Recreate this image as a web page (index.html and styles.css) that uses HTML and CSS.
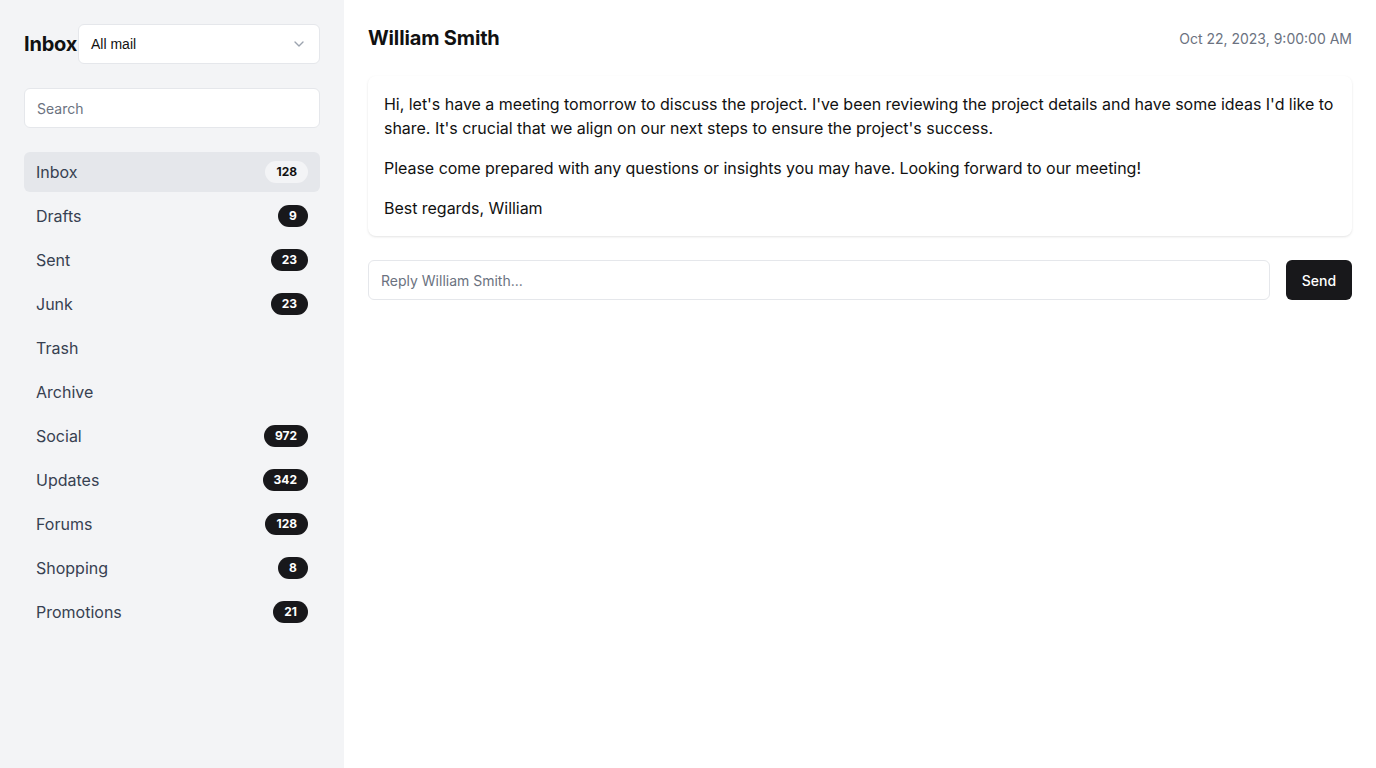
FILE: index.html
```html
<!DOCTYPE html>
<html lang="en">
<head>
<meta charset="utf-8">
<title>Mail</title>
<link rel="stylesheet" href="styles.css">
</head>
<body>
<div class="app">
  <aside class="sidebar">
    <div class="side-head">
      <h1 class="side-title">Inbox</h1>
      <div class="select">
        <span>All mail</span>
        <svg class="chev" width="16" height="16" viewBox="0 0 24 24" fill="none" stroke="currentColor" stroke-width="2" stroke-linecap="round" stroke-linejoin="round"><path d="m6 9 6 6 6-6"/></svg>
      </div>
    </div>
    <div class="search">Search</div>
    <nav class="nav">
      <div class="nav-item active"><span>Inbox</span><span class="badge light">128</span></div>
      <div class="nav-item"><span>Drafts</span><span class="badge">9</span></div>
      <div class="nav-item"><span>Sent</span><span class="badge">23</span></div>
      <div class="nav-item"><span>Junk</span><span class="badge">23</span></div>
      <div class="nav-item"><span>Trash</span></div>
      <div class="nav-item"><span>Archive</span></div>
      <div class="nav-item"><span>Social</span><span class="badge">972</span></div>
      <div class="nav-item"><span>Updates</span><span class="badge">342</span></div>
      <div class="nav-item"><span>Forums</span><span class="badge">128</span></div>
      <div class="nav-item"><span>Shopping</span><span class="badge">8</span></div>
      <div class="nav-item"><span>Promotions</span><span class="badge">21</span></div>
    </nav>
  </aside>
  <main class="main">
    <div class="mail-head">
      <h2 class="sender">William Smith</h2>
      <span class="date">Oct 22, 2023, 9:00:00 AM</span>
    </div>
    <div class="card">
      <p>Hi, let's have a meeting tomorrow to discuss the project. I've been reviewing the project details and have some ideas I'd like to share. It's crucial that we align on our next steps to ensure the project's success.</p>
      <p>Please come prepared with any questions or insights you may have. Looking forward to our meeting!</p>
      <p>Best regards, William</p>
    </div>
    <div class="reply">
      <div class="reply-input">Reply William Smith...</div>
      <button class="send">Send</button>
    </div>
  </main>
</div>
</body>
</html>
```
FILE: styles.css
```css
* { box-sizing: border-box; }
html, body { margin: 0; padding: 0; }
body {
  font-family: Inter, "Noto Sans", sans-serif;
  color: #111111;
  background: #ffffff;
}
.app {
  display: flex;
  width: 1376px;
  height: 768px;
}
.sidebar {
  width: 344px;
  flex: none;
  background: #f3f4f6;
  padding: 24px;
  display: flex;
  flex-direction: column;
}
.side-head {
  display: flex;
  align-items: center;
  height: 40px;
}
.side-title {
  margin: 0;
  font-size: 20px;
  font-weight: 700;
  line-height: 28px;
  letter-spacing: -0.2px;
  width: 54px;
  flex: none;
  color: #111;
}
.select {
  flex: 1;
  height: 40px;
  background: #fff;
  border: 1px solid #e5e7eb;
  border-radius: 6px;
  display: flex;
  align-items: center;
  justify-content: space-between;
  padding: 0 12px;
  font-family: "Liberation Sans", Arial, sans-serif;
  font-size: 14px;
  color: #111;
}
.chev { color: #9ca3af; }
.search {
  margin-top: 24px;
  height: 40px;
  background: #fff;
  border: 1px solid #e5e7eb;
  border-radius: 6px;
  padding: 0 12px;
  display: flex;
  align-items: center;
  font-size: 14px;
  color: #6b7280;
}
.nav {
  margin-top: 24px;
  display: flex;
  flex-direction: column;
  gap: 4px;
}
.nav-item {
  height: 40px;
  display: flex;
  align-items: center;
  justify-content: space-between;
  padding: 0 12px;
  border-radius: 6px;
  font-size: 16px;
  color: #374151;
}
.nav-item.active { background: #e5e7eb; }
.badge {
  background: #18181b;
  color: #fff;
  font-size: 12px;
  font-weight: 700;
  height: 22px;
  line-height: 22px;
  border-radius: 11px;
  padding: 0 11px;
  min-width: 30px;
  text-align: center;
}
.badge.light {
  background: #f3f4f6;
  color: #111;
}
.main {
  flex: 1;
  padding: 24px;
  display: flex;
  flex-direction: column;
}
.mail-head {
  display: flex;
  justify-content: space-between;
  align-items: center;
  height: 28px;
}
.sender {
  margin: 0;
  font-size: 20px;
  font-weight: 700;
  line-height: 28px;
  letter-spacing: -0.15px;
  color: #111;
}
.date {
  font-size: 14px;
  color: #6b7280;
}
.card {
  margin-top: 24px;
  background: #fff;
  border-radius: 8px;
  box-shadow: 0 1px 3px rgba(0,0,0,0.08), 0 1px 2px rgba(0,0,0,0.04);
  padding: 16px;
}
.card p {
  margin: 0 0 16px;
  font-size: 16px;
  line-height: 24px;
  letter-spacing: -0.03px;
  color: #111;
}
.card p:last-child { margin-bottom: 0; }
.reply {
  margin-top: 24px;
  display: flex;
  gap: 16px;
}
.reply-input {
  flex: 1;
  height: 40px;
  border: 1px solid #e5e7eb;
  border-radius: 6px;
  padding: 0 12px;
  display: flex;
  align-items: center;
  font-size: 14px;
  color: #6b7280;
}
.send {
  width: 66px;
  height: 40px;
  border: none;
  border-radius: 6px;
  background: #18181b;
  color: #fff;
  font-family: Inter, sans-serif;
  font-size: 14px;
  font-weight: 500;
}
```
